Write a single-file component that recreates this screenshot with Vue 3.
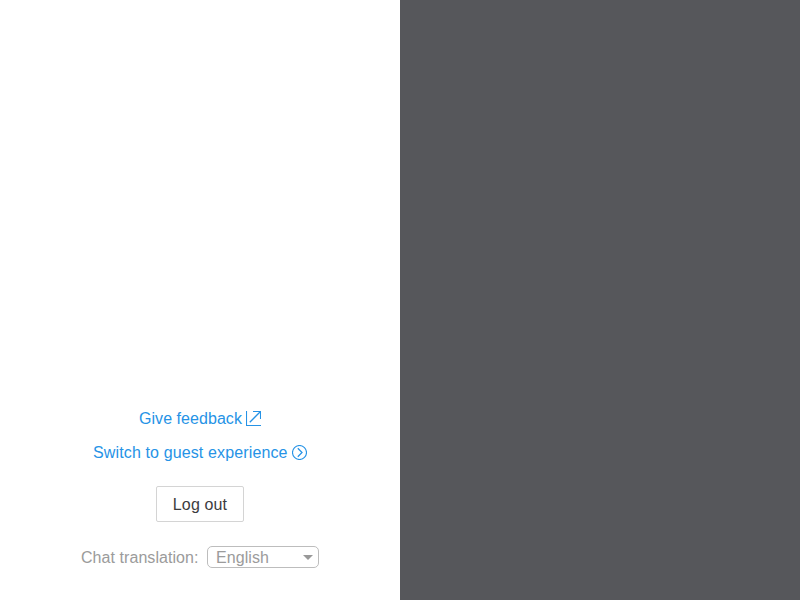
<script setup>
import { ref } from 'vue'

const language = ref('English')
</script>

<template>
  <div class="page">
    <main class="panel">
      <a class="link feedback">
        <span class="text">Give feedback</span>
        <svg class="icon" width="15" height="15" viewBox="0 0 15 15" aria-hidden="true">
          <path d="M.5 0v14.5H15M7 .5h7.5V8" />
          <path class="stroke-strong" d="M3.8 11.2 14.5.5" />
        </svg>
      </a>
      <a class="link switch">
        <span class="text">Switch to guest experience</span>
        <svg class="icon" width="15" height="15" viewBox="0 0 15 15" aria-hidden="true">
          <circle cx="7.5" cy="7.5" r="7" />
          <path class="stroke-strong" d="M5.8 3.3 10 7.5l-4.2 4.2" />
        </svg>
      </a>
      <button class="logout" type="button">Log out</button>
      <div class="translation">
        <span class="label">Chat translation:</span>
        <div class="select">
          <span class="value">{{ language }}</span>
          <svg width="10" height="5" viewBox="0 0 10 5" aria-hidden="true"><path d="M0 0h10L5 5z" /></svg>
        </div>
      </div>
    </main>
    <aside class="overlay"></aside>
  </div>
</template>

<style>
body {
  margin: 0;
}
</style>

<style scoped>
.page {
  display: grid;
  grid-template-columns: 1fr 1fr;
  height: 100vh;
  overflow: hidden;
  background: #fff;
  font: 16px/24px "Liberation Sans", sans-serif;
}
.panel {
  display: flex;
  flex-direction: column;
  align-items: center;
  justify-content: flex-end;
  box-sizing: border-box;
  padding-bottom: 32px;
}
.overlay {
  background: #56575b;
}
.link {
  display: flex;
  align-items: center;
  justify-content: space-between;
  height: 24px;
  padding-top: 1px;
  box-sizing: border-box;
  color: #2693e6;
  white-space: nowrap;
}
.icon {
  flex: none;
  fill: none;
  stroke: #2693e6;
  stroke-width: 1.1;
}
.stroke-strong {
  stroke-width: 1.25;
}
.feedback {
  width: 122px;
  letter-spacing: 0.05px;
}
.switch {
  width: 214px;
  margin-top: 10px;
  letter-spacing: 0.13px;
}
.link .text {
  padding-top: 1px;
}
.label,
.value {
  padding-top: 2px;
}
.logout {
  box-sizing: border-box;
  width: 88px;
  height: 36px;
  margin: 22px 0 24px;
  padding: 2px 0 0;
  border: 1px solid #d4d4d4;
  border-radius: 2px;
  background: #fff;
  color: #3c3c3e;
  font: inherit;
  letter-spacing: 0.15px;
}
.translation {
  display: flex;
  align-items: center;
  justify-content: space-between;
  width: 238px;
  height: 22px;
  color: #9b9b9b;
  letter-spacing: 0.06px;
  white-space: nowrap;
}
.select {
  display: flex;
  align-items: center;
  justify-content: space-between;
  box-sizing: border-box;
  width: 112px;
  height: 22px;
  padding: 0 5px 0 8px;
  border: 1px solid #bdbdbd;
  border-radius: 5px;
}
.select svg {
  fill: #999;
}
</style>
